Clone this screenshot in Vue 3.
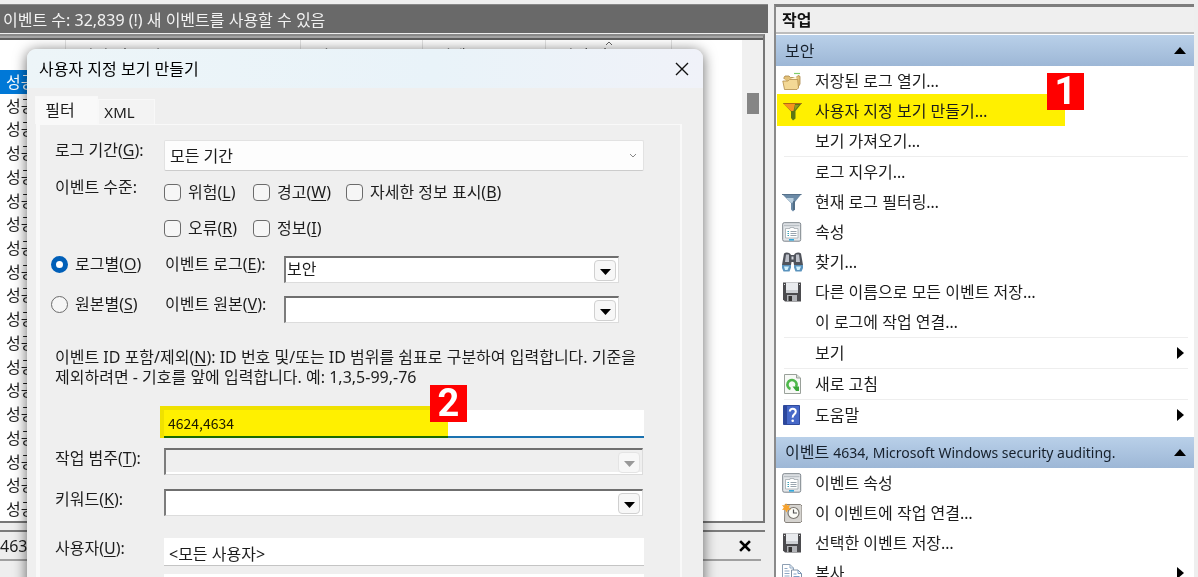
<script setup>
import { ref } from 'vue'

const rows = Array.from({ length: 19 }, (_, i) => i)
const columns = ['', '날짜 및 시간', '원본', '이벤트 ID', '작업 범주', '']

const period = ref('모든 기간')
const logBy = ref('log')
const ids = ref('4624,4634')
const user = ref('<모든 사용자>')

const levels = [
  [
    { id: 'critical', text: '위험', key: 'L' },
    { id: 'warning', text: '경고', key: 'W' },
    { id: 'verbose', text: '자세한 정보 표시', key: 'B' },
  ],
  [
    { id: 'error', text: '오류', key: 'R' },
    { id: 'info', text: '정보', key: 'I' },
  ],
]

const sections = [
  {
    title: '보안',
    items: [
      { text: '저장된 로그 열기…', icon: 'folder' },
      { text: '사용자 지정 보기 만들기…', icon: 'funnelGold', marked: true },
      { text: '보기 가져오기…' },
      { text: '로그 지우기…', sep: true },
      { text: '현재 로그 필터링…', icon: 'funnel' },
      { text: '속성', icon: 'props' },
      { text: '찾기…', icon: 'find' },
      { text: '다른 이름으로 모든 이벤트 저장…', icon: 'disk' },
      { text: '이 로그에 작업 연결…' },
      { text: '보기', sep: true, more: true },
      { text: '새로 고침', icon: 'refresh', sep: true },
      { text: '도움말', icon: 'help', sep: true, more: true },
    ],
  },
  {
    title: '이벤트',
    detail: '4634, Microsoft Windows security auditing.',
    items: [
      { text: '이벤트 속성', icon: 'props' },
      { text: '이 이벤트에 작업 연결…', icon: 'task' },
      { text: '선택한 이벤트 저장…', icon: 'disk' },
      { text: '복사', icon: 'copy', more: true },
    ],
  },
]
</script>

<template>
  <div class="screen">
    <main class="left">
      <header class="status">이벤트 수: 32,839 (!) 새 이벤트를 사용할 수 있음</header>

      <section class="events">
        <table>
          <colgroup>
            <col class="c1" /><col class="c2" /><col class="c3" /><col class="c4" /><col class="c5" /><col />
          </colgroup>
          <thead>
            <tr>
              <th v-for="(c, i) in columns" :key="i">
                {{ c }}
                <svg v-if="i === 4" class="sort" viewBox="0 0 8 5"><path d="M1 4 4 1l3 3" fill="none" stroke="#666" /></svg>
              </th>
            </tr>
          </thead>
          <tbody>
            <tr v-for="r in rows" :key="r" :class="{ selected: r === 0 }">
              <td>성공</td><td></td><td></td><td></td><td></td><td></td>
            </tr>
          </tbody>
        </table>
        <div class="scroll"><div class="thumb"></div></div>
      </section>

      <section class="preview">
        <header>
          <span>4634</span>
          <button type="button" aria-label="미리 보기 닫기">
            <svg width="12" height="12" viewBox="0 0 12 12"><path d="M2 2l8 8M10 2l-8 8" stroke="#000" stroke-width="2.6" stroke-linecap="square" /></svg>
          </button>
        </header>
      </section>

      <div class="dialog" role="dialog" aria-labelledby="dlg-title">
        <div class="titlebar">
          <h1 id="dlg-title">사용자 지정 보기 만들기</h1>
          <button type="button" aria-label="닫기">
            <svg width="14" height="14" viewBox="0 0 14 14"><path d="M1 1l12 12M13 1 1 13" stroke="#111" stroke-width="1.4" /></svg>
          </button>
        </div>

        <div class="tabs" role="tablist">
          <button type="button" role="tab" class="tab active" aria-selected="true">필터</button>
          <button type="button" role="tab" class="tab" aria-selected="false">XML</button>
        </div>

        <form class="panel" @submit.prevent>
          <div class="row period">
            <label for="period">로그 기간(<u>G</u>):</label>
            <div class="pick">
              <select id="period" v-model="period"><option>모든 기간</option></select>
              <svg width="8" height="6" viewBox="0 0 8 6"><path d="M1 1l3 3 3-3" fill="none" stroke="#888" /></svg>
            </div>
          </div>

          <div class="row levels" role="group" aria-labelledby="lv">
            <span id="lv">이벤트 수준:</span>
            <div class="checks">
              <div v-for="(line, i) in levels" :key="i" class="checkline">
                <label v-for="l in line" :key="l.id"><input type="checkbox" :name="l.id" /><span>{{ l.text }}(<u>{{ l.key }}</u>)</span></label>
              </div>
            </div>
          </div>

          <div class="row source first">
            <label class="radio"><input v-model="logBy" type="radio" value="log" name="by" /><span>로그별(<u>O</u>)</span></label>
            <label for="elog">이벤트 로그(<u>E</u>):</label>
            <div class="combo">
              <select id="elog"><option>보안</option></select>
              <span class="drop"><svg width="11" height="6" viewBox="0 0 11 6"><path d="M0 0h11L5.500 6z" /></svg></span>
            </div>
          </div>
          <div class="row source">
            <label class="radio"><input v-model="logBy" type="radio" value="source" name="by" /><span>원본별(<u>S</u>)</span></label>
            <label for="esrc">이벤트 원본(<u>V</u>):</label>
            <div class="combo">
              <select id="esrc"><option></option></select>
              <span class="drop"><svg width="11" height="6" viewBox="0 0 11 6"><path d="M0 0h11L5.500 6z" /></svg></span>
            </div>
          </div>

          <label class="hint" for="ids">이벤트 ID 포함/제외(<u>N</u>): ID 번호 및/또는 ID 범위를 쉼표로 구분하여 입력합니다. 기준을 제외하려면 - 기호를 앞에 입력합니다. 예: 1,3,5-99,-76</label>

          <div class="ids">
            <input id="ids" v-model="ids" type="text" />
            <span class="mark"></span>
            <b class="badge two">2</b>
          </div>

          <div class="row category">
            <label for="cat">작업 범주(<u>T</u>):</label>
            <div class="combo off">
              <select id="cat" disabled><option></option></select>
              <span class="drop"><svg width="11" height="6" viewBox="0 0 11 6"><path d="M0 0h11L5.500 6z" /></svg></span>
            </div>
          </div>
          <div class="row keyword">
            <label for="kw">키워드(<u>K</u>):</label>
            <div class="combo">
              <select id="kw"><option></option></select>
              <span class="drop"><svg width="11" height="6" viewBox="0 0 11 6"><path d="M0 0h11L5.500 6z" /></svg></span>
            </div>
          </div>
          <div class="row user">
            <label for="user">사용자(<u>U</u>):</label>
            <input id="user" v-model="user" type="text" />
          </div>
          <div class="row computer">
            <span></span>
            <input type="text" aria-label="컴퓨터" />
          </div>
        </form>
      </div>
    </main>

    <aside class="actions">
      <h2>작업</h2>
      <section v-for="s in sections" :key="s.title">
        <h3>
          <span>{{ s.title }} <small v-if="s.detail">{{ s.detail }}</small></span>
          <svg width="12" height="7" viewBox="0 0 12 7"><path d="M0 7 6 0l6 7z" /></svg>
        </h3>
        <ul>
          <li v-for="it in s.items" :key="it.text" :class="{ sep: it.sep, marked: it.marked }">
            <button type="button">
              <span class="icon">
                <svg v-if="it.icon === 'folder'" width="20" height="20" viewBox="0 0 20 20">
                  <path d="M12 2.500h6" stroke="#7fcf6a" stroke-width="1.200" />
                  <path d="M2 8V6.500L3 5h4l1.500 1.500H14L16 4.500l2 .8V13l-3 5" fill="#e2c078" stroke="#a98544" stroke-width=".8" />
                  <path d="M6 9l8-3.500 1 4z" fill="#fff6d8" />
                  <path d="M.8 10h5l1.700-1.500h8.200l.8 8.500-1.500 1.500H2.500z" fill="#f3d895" stroke="#b18b48" stroke-width=".8" />
                </svg>
                <svg v-else-if="it.icon === 'funnelGold'" width="20" height="20" viewBox="0 0 20 20">
                  <path d="M1 2h19l-6.500 8v7.500l-2.500 2L9 17v-6.500z" fill="#5d7614" />
                  <path d="M1.500 3h11.500L11.500 10H9z" fill="#f7941e" />
                  <path d="M13 4h4l-4.500 5.500z" fill="#8d9a1c" />
                  <path d="M1.500 2.500h18" stroke="#b06a12" />
                </svg>
                <svg v-else-if="it.icon === 'funnel'" width="20" height="20" viewBox="0 0 20 20">
                  <path d="M0 2h19.500L13 10v7.500l-2 2-2-2V11z" fill="#6b8aa6" />
                  <path d="M4 6h7.500v4L9.500 11z" fill="#b9cfdf" />
                  <path d="M0 2.500h19.500" stroke="#56718a" />
                  <path d="M12 9v9" stroke="#49647c" stroke-width="1.500" />
                </svg>
                <svg v-else-if="it.icon === 'props'" width="20" height="20" viewBox="0 0 20 20">
                  <rect x=".7" y=".7" width="18" height="18.500" rx="1.500" fill="#e4e7ea" stroke="#7d858c" />
                  <path d="M2 3.500h15.500" stroke="#b9bfc4" stroke-width="1.500" />
                  <path d="M3.500 6.500h4.500v-1h4v1h4V16H3.500z" fill="#fff" stroke="#a2a9af" stroke-width=".8" />
                  <path d="M8.500 9.500h6M8.500 11.500h6M8.500 13.500h6" stroke="#8d9aa5" stroke-width=".9" />
                  <path d="M5.500 9.500h1.500M5.500 11.500h1.500M5.500 13.500h1.500" stroke="#3aa0b5" />
                  <path d="M7 17.800h5" stroke="#32a8dc" stroke-width="1.600" />
                </svg>
                <svg v-else-if="it.icon === 'find'" width="21" height="20" viewBox="0 0 21 20">
                  <path d="M2 1.500Q4.500-.5 8 1.500L9 3h3l1-1.500Q16.500-.5 19 1.500L21 13h-9l-.5-3h-2L9 13H0z" fill="#4f535b" />
                  <path d="M4 2.500h3v7.500H3zM14 2.500h3l1 7.500h-4z" fill="#bcc0c9" />
                  <path d="M9.500 4.500h2v3h-2z" fill="#d5d8de" />
                  <path d="M0 13h9v2.500L7.500 19.500h-6L0 16zM12 13h9v3l-1.500 3.500h-6L12 15.500z" fill="#5a93bd" />
                  <path d="M2 14.500h5L5.500 18H3zM14 14.500h5L17.500 18H15z" fill="#d2f1fd" />
                </svg>
                <svg v-else-if="it.icon === 'disk'" width="20" height="20" viewBox="0 0 20 20">
                  <path d="M1 .5h18v19H3L1 17.500z" fill="#4b4b4e" />
                  <path d="M4 .5h12V11H4z" fill="#e9ebee" />
                  <path d="M4 8h12v3H4z" fill="#cdd0d4" />
                  <path d="M5 13h10v6H5z" fill="#b2b4b8" />
                  <path d="M6.500 14H10v5H6.500z" fill="#333" />
                  <path d="M2 2h1v1H2zM17 2h1v1h-1z" fill="#ddd" />
                </svg>
                <svg v-else-if="it.icon === 'refresh'" width="20" height="20" viewBox="0 0 20 20">
                  <path d="M2.500.5h12L18.500 4v15.500h-16z" fill="#f7f9f6" stroke="#9aa19a" />
                  <path d="M14.500.5V4h4" fill="#d9ddd9" stroke="#9aa19a" />
                  <path d="M8.500 15A4.600 4.600 0 1 1 14 13" fill="none" stroke="#4fb84b" stroke-width="2.600" />
                  <path d="M10.500 12.500h6.500v4.500h-3z" fill="#3aa638" />
                </svg>
                <svg v-else-if="it.icon === 'help'" width="20" height="20" viewBox="0 0 20 20">
                  <path d="M1.500.5h16v19h-16z" fill="#4668c8" stroke="#2f4a9c" />
                  <path d="M2 1h3v18H2z" fill="#2c479c" />
                  <path d="M7.800 6.500Q8 3.800 10.800 3.800t3 2.700q0 1.600-1.600 2.900t-1.500 3.200" fill="none" stroke="#fff" stroke-width="2" />
                  <circle cx="10.700" cy="15.700" r="1.300" fill="#fff" />
                </svg>
                <svg v-else-if="it.icon === 'task'" width="20" height="20" viewBox="0 0 20 20">
                  <path d="M3 1.500h15.500L20 3v15l-1.500 1.500H3.500L2.500 18z" fill="#d5d3cf" stroke="#87827c" />
                  <circle cx="11.500" cy="10" r="5.500" fill="#fbfbf6" stroke="#7a766f" stroke-width="1.200" />
                  <path d="M11.500 6.500V10h3.500" fill="none" stroke="#555" stroke-width="1.200" />
                  <path d="M4 0l1.200 2.600L8 2 6.800 4.500 9 6.500l-3 .3L4.500 9.500 3.200 6.800 0 7l1.800-2.500L0 2l3 .5z" fill="#f8a32c" />
                </svg>
                <svg v-else-if="it.icon === 'copy'" width="20" height="20" viewBox="0 0 20 20">
                  <path d="M.5 1.500H8L11.500 5v10H.5z" fill="#fff" stroke="#8ea0b4" />
                  <path d="M8 1.500V5h3.500M2.500 5.500h3M2.500 8h5M2.500 10.500h5M2.500 13h5" fill="none" stroke="#8fa9c6" />
                  <path d="M9.500 7H16l3.500 3.500v9h-10z" fill="#fff" stroke="#7f90a4" />
                  <path d="M16 7v3.500h3.500M11.500 11h3M11.500 13.500h6M11.500 16h6" fill="none" stroke="#7fa0c6" />
                </svg>
              </span>
              <span class="text">{{ it.text }}</span>
              <svg v-if="it.more" class="more" width="7" height="12" viewBox="0 0 7 12"><path d="M0 0l7 6-7 6z" /></svg>
            </button>
            <b v-if="it.marked" class="badge one">1</b>
          </li>
        </ul>
      </section>
    </aside>
  </div>
</template>

<style>
body {
  margin: 0;
  overflow: hidden;
}
</style>

<style scoped>
* {
  box-sizing: border-box;
}
.screen {
  display: flex;
  gap: 6px;
  height: 100vh;
  padding: 4px 4px 0 0;
  overflow: hidden;
  background: #eee;
  color: #1c1c1c;
  font: 16px/20px "Noto Sans", "Noto Sans CJK KR", sans-serif;
}
button, input, select {
  font: inherit;
  color: inherit;
  margin: 0;
}
button {
  padding: 0;
  border: 0;
  background: none;
}
svg {
  display: block;
}
u {
  text-underline-offset: 2px;
}

/* event list */
.left {
  position: relative;
  flex: 1;
  min-width: 0;
  display: flex;
  flex-direction: column;
}
.status {
  height: 29px;
  padding-left: 3px;
  background: #696969;
  border-top: 1px solid #888;
  color: #f2f2f2;
  line-height: 30px;
  white-space: nowrap;
}
.events {
  display: flex;
  height: 489px;
  margin: 1px 3px 0 0;
  border-top: 2px solid #8a8a8a;
  border-right: 2px solid #777;
  border-bottom: 2px solid #777;
  background: #fff;
  box-shadow: inset 0 2px #a5a5a5, inset 0 4px #606060;
  padding-top: 4px;
}
table {
  flex: 1;
  height: 100%;
  table-layout: fixed;
  border-collapse: collapse;
}
.c1 { width: 65px; }
.c2 { width: 235px; }
.c3 { width: 122px; }
.c4 { width: 123px; }
.c5 { width: 126px; }
th {
  position: relative;
  height: 30px;
  padding: 2px 0 0 14px;
  border-right: 1px solid #e2e2e2;
  font-weight: 400;
  text-align: left;
}
th:last-child {
  border: 0;
}
.sort {
  position: absolute;
  top: 1px;
  left: 59px;
  width: 8px;
  height: 5px;
}
td {
  padding: 0 0 0 6px;
  line-height: 20px;
}
.selected td:not(:last-child) {
  background: #0078d7;
  color: #fff;
}
.scroll {
  width: 21px;
  padding: 53px 4px 0 5px;
  background: #f0f0f0;
}
.thumb {
  height: 21px;
  background: #858585;
}
.preview {
  flex: 1;
  margin: 7px 3px 0 0;
  border-top: 2px solid #7c7c7c;
}
.preview header {
  display: flex;
  align-items: center;
  justify-content: space-between;
  height: 29px;
  margin-right: 4px;
  padding-right: 10px;
  border-bottom: 2px solid #a0a0a0;
}

/* dialog */
.dialog {
  position: absolute;
  top: 45px;
  left: 27px;
  right: 65px;
  bottom: -20px;
  border-radius: 9px 9px 0 0;
  background: #efefef;
  box-shadow: 0 2px 14px rgba(0, 0, 0, 0.6);
}
.titlebar {
  display: flex;
  align-items: center;
  justify-content: space-between;
  height: 39px;
  padding: 0 14px 0 12px;
  border-radius: 9px 9px 0 0;
  background: linear-gradient(90deg, #edf5f8, #e9f3f9 60%, #f0f2f9);
}
h1 {
  margin: 0;
  font-size: 16px;
  font-weight: 400;
  color: #000;
}
.tabs {
  display: flex;
  align-items: flex-end;
  height: 36px;
  padding-left: 8px;
}
.tab {
  width: 57px;
  height: 25px;
  padding: 0 14px 0 0;
  background: #f3f3f3;
  border: 1px solid #f8f8f8;
  border-bottom: 0;
  font-size: 15px;
}
.tab.active {
  width: 63px;
  height: 28px;
  padding: 0 13px 2px 0;
  background: #f9f9f9;
  font-size: 16px;
}
.panel {
  margin: 0 21px 0 9px;
  height: 600px;
  padding: 15px 36px 0 15px;
  border: 1px solid #f9f9f9;
  border-left-width: 4px;
  border-right-width: 2px;
}
.row {
  display: grid;
  grid-template-columns: 109px minmax(0, 1fr);
  align-items: start;
  white-space: nowrap;
}
.pick {
  position: relative;
}
.pick select {
  display: block;
  width: 100%;
  height: 31px;
  padding: 0 5px;
  appearance: none;
  border: 1px solid #e2e2e2;
  border-bottom-color: #ccc;
  border-radius: 2px;
  background: #fdfdfd;
}
.pick svg {
  position: absolute;
  top: 13px;
  right: 7px;
  pointer-events: none;
}
.levels {
  margin-top: 6px;
}
.checks {
  display: grid;
  gap: 16px;
  padding-top: 5px;
}
.checkline {
  display: flex;
  gap: 17px;
}
.checkline label,
.radio {
  display: flex;
  align-items: center;
  gap: 7px;
}
.checkline label:first-child {
  width: 72px;
}
.checkline label:nth-child(2) {
  width: 76px;
}
input[type="checkbox"],
input[type="radio"] {
  flex: none;
  width: 17px;
  height: 17px;
  appearance: none;
  border: 1px solid #6b6b6b;
  border-radius: 4px;
  background: #f6f6f6;
}
input[type="radio"] {
  border-radius: 50%;
}
input[type="radio"]:checked {
  border: 5px solid #005fb8;
  background: #fff;
}
.source {
  grid-template-columns: 114px 119px minmax(0, 1fr);
  margin: 11px 25px 0 -4px;
}
.source.first {
  margin-top: 16px;
}
.source .combo {
  margin-top: 2px;
}
.combo {
  position: relative;
  height: 27px;
  border: 1px solid #dcdcdc;
  border-top: 2px solid #6f6f6f;
  border-left: 2px solid #7c7c7c;
  background: #fff;
}
.combo select {
  display: block;
  width: 100%;
  height: 22px;
  padding: 0 30px 0 1px;
  appearance: none;
  border: 0;
  background: transparent;
  opacity: 1;
}
.drop {
  position: absolute;
  top: 2px;
  right: 2px;
  display: grid;
  place-items: center;
  width: 22px;
  height: 21px;
  padding-top: 3px;
  border: 1px solid #d0d0d0;
  border-radius: 4px;
  background: #f7f7f7;
  pointer-events: none;
}
.off select {
  background: #efefef;
}
.off .drop {
  border-color: #e4e4e4;
  fill: #999;
}
.hint {
  display: block;
  margin: 24px -6px 0 0;
}
.ids {
  position: relative;
  margin: 23px 0 0 109px;
}
input[type="text"] {
  display: block;
  width: 100%;
  height: 28px;
  padding: 2px 5px 0;
  border: 0;
  border-bottom: 1px solid #c4c4c4;
  border-radius: 0;
  background: #fff;
}
.ids input[type="text"] {
  padding: 0 4px;
  border-bottom: 2px solid #1a72b0;
  font: 14px/20px "Noto Sans CJK KR", sans-serif;
}
.mark {
  position: absolute;
  top: -4px;
  bottom: 0;
  left: -4px;
  width: 288px;
  background: #fff000;
  mix-blend-mode: multiply;
  pointer-events: none;
}
.badge {
  position: absolute;
  width: 37px;
  height: 37px;
  background: #f00;
  color: #fff;
  font: bold 38px/36px Roboto, "Noto Sans", sans-serif;
  text-align: center;
}
.two {
  top: -25px;
  left: 266px;
}
.category,
.keyword {
  margin-right: 1px;
}
.category {
  margin-top: 10px;
}
.keyword {
  margin-top: 14px;
}
.user {
  margin-top: 22px;
}
.computer {
  margin-top: 8px;
}

/* actions pane */
.actions {
  flex: 0 0 420px;
  border-top: 3px solid #7d7d7d;
  border-left: 2px solid #8a8a8a;
  background: #fff;
}
h2 {
  height: 27px;
  margin: 0;
  padding-left: 6px;
  border-bottom: 2px solid #bdbdbd;
  background: #efefef;
  color: #111;
  font-size: 16px;
  line-height: 26px;
}
h3 {
  display: flex;
  align-items: center;
  justify-content: space-between;
  height: 31px;
  margin: 1px 0 0;
  padding: 0 8px 0 9px;
  background: linear-gradient(#b9d0e9, #9db7d6);
  color: #16202c;
  font-size: 16px;
  font-weight: 400;
  white-space: nowrap;
}
h3 small {
  font-size: 14px;
}
h3 svg {
  fill: #000;
}
ul {
  margin: 0;
  padding: 0 0 6px;
  list-style: none;
}
li {
  position: relative;
}
li.sep {
  border-top: 1px solid #eee;
  margin: 0 6px 0 8px;
}
li button {
  display: flex;
  align-items: center;
  gap: 13px;
  width: 100%;
  height: 30px;
  padding: 0 10px 0 6px;
  text-align: left;
  white-space: nowrap;
}
li.sep button {
  padding: 0 4px 0 0;
}
.icon {
  flex: none;
  width: 20px;
}
li.sep .icon {
  margin-left: -2px;
}
.text {
  flex: 1;
}
.marked::before {
  content: "";
  position: absolute;
  inset: -2px auto 0 1px;
  width: 288px;
  background: #fff000;
}
.marked button {
  position: relative;
}
.one {
  top: -23px;
  left: 271px;
}
</style>
